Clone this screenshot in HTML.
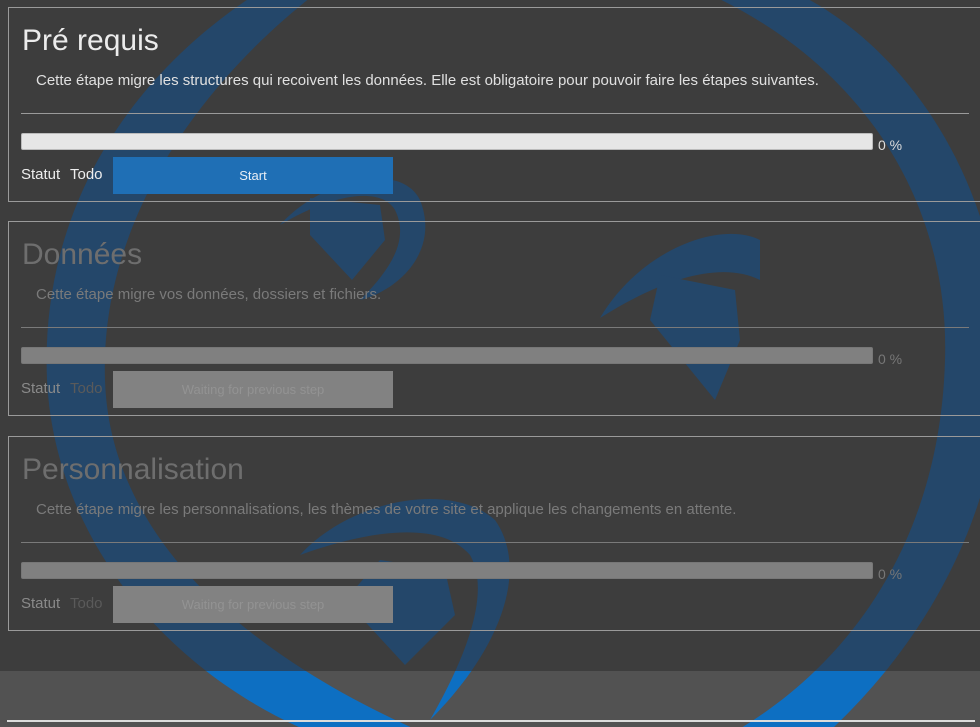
<!DOCTYPE html>
<html><head><meta charset="utf-8"><style>
*{margin:0;padding:0;box-sizing:border-box}
body{width:980px;height:727px;overflow:hidden;background:#3d3d3d;font-family:"Liberation Sans",sans-serif;position:relative}
#bot{position:absolute;left:0;top:671px;width:980px;height:56px;background:#525252}
svg{position:absolute;left:0;top:0}
.panel{position:absolute;left:8px;width:990px;height:195px;border:1px solid #9a9a9a}
.t{position:absolute;left:13px;top:16px;font-size:30px;font-weight:300;color:#ececec}
.d{position:absolute;left:27px;top:64px;font-size:15px;color:#e0e0e0;white-space:nowrap}
.hr{position:absolute;left:12px;top:105px;width:948px;height:1px;background:#9a9a9a}
.bar{position:absolute;left:12px;top:125px;width:852px;height:17px;background:#e6e6e6;border:1px solid #bbb;border-radius:2px}
.pc{position:absolute;left:869px;top:129px;font-size:14px;color:#ddd}
.st{position:absolute;left:12px;top:158px;font-size:15px;color:#eee}
.td{position:absolute;left:61px;top:158px;font-size:15px;color:#eee}
.btn{position:absolute;left:104px;top:149px;width:280px;height:37px;background:#1f6fb5;color:#e8eef5;font-size:13px;text-align:center;line-height:37px}
.dis .t{color:#6e6e6e}
.dis .d{color:#7a7a7a}
.dis .hr{background:#7a7a7a}
.dis .bar{background:#808080;border-color:#777}
.dis .pc{color:#777}
.dis .st{color:#8a8a8a}
.dis .td{color:#5a5a5a}
.dis .btn{background:#828282;color:#939393}
#line{position:absolute;left:7px;top:720px;width:968px;height:2px;background:#dcdcdc}
</style></head><body>
<div id="bot"></div>
<svg width="980" height="727" viewBox="0 0 980 727">
<defs>
<g id="logo">
<path d="M262 -10 C 120 80 40 220 47 380 C 55 540 170 680 330 740 L 440 740 C 250 660 110 540 105 380 C 100 230 190 90 320 -10 Z"/>
<path d="M700 -10 C 860 60 950 200 945 360 C 940 540 850 670 720 740 L 820 740 C 920 650 1000 520 1002 360 C 1004 180 900 40 790 -10 Z"/>
<path d="M280 225 C 320 180 400 160 420 200 C 440 250 400 290 360 300 C 390 270 410 240 395 210 C 380 185 330 195 280 225 Z"/>
<path d="M310 198 L 380 205 L 385 240 L 352 280 L 310 235 Z"/>
<path d="M600 318 C 640 250 720 220 760 240 L 760 280 C 720 260 660 280 600 318 Z"/>
<path d="M660 275 L 735 290 L 740 340 L 715 400 L 650 320 Z"/>
<path d="M300 555 C 350 500 450 480 495 520 C 530 570 500 650 430 720 C 470 650 490 590 470 555 C 440 520 370 530 300 555 Z"/>
<path d="M380 560 L 445 570 L 455 615 L 405 665 L 345 600 Z"/>
</g>
<clipPath id="top"><rect x="0" y="0" width="980" height="671"/></clipPath>
<clipPath id="bt"><rect x="0" y="671" width="980" height="56"/></clipPath>
</defs>
<use href="#logo" fill="#24476a" clip-path="url(#top)"/>
<use href="#logo" fill="#0d6fc2" clip-path="url(#bt)"/>
</svg>

<div class="panel" style="top:7px">
<div class="t">Pré requis</div>
<div class="d">Cette étape migre les structures qui recoivent les données. Elle est obligatoire pour pouvoir faire les étapes suivantes.</div>
<div class="hr"></div><div class="bar"></div><div class="pc">0 %</div>
<div class="st">Statut</div><div class="td">Todo</div><div class="btn">Start</div>
</div>
<div class="panel dis" style="top:221px">
<div class="t">Données</div>
<div class="d">Cette étape migre vos données, dossiers et fichiers.</div>
<div class="hr"></div><div class="bar"></div><div class="pc">0 %</div>
<div class="st">Statut</div><div class="td">Todo</div><div class="btn">Waiting for previous step</div>
</div>
<div class="panel dis" style="top:436px">
<div class="t">Personnalisation</div>
<div class="d">Cette étape migre les personnalisations, les thèmes de votre site et applique les changements en attente.</div>
<div class="hr"></div><div class="bar"></div><div class="pc">0 %</div>
<div class="st">Statut</div><div class="td">Todo</div><div class="btn">Waiting for previous step</div>
</div>
<div id="line"></div>
</body></html>
